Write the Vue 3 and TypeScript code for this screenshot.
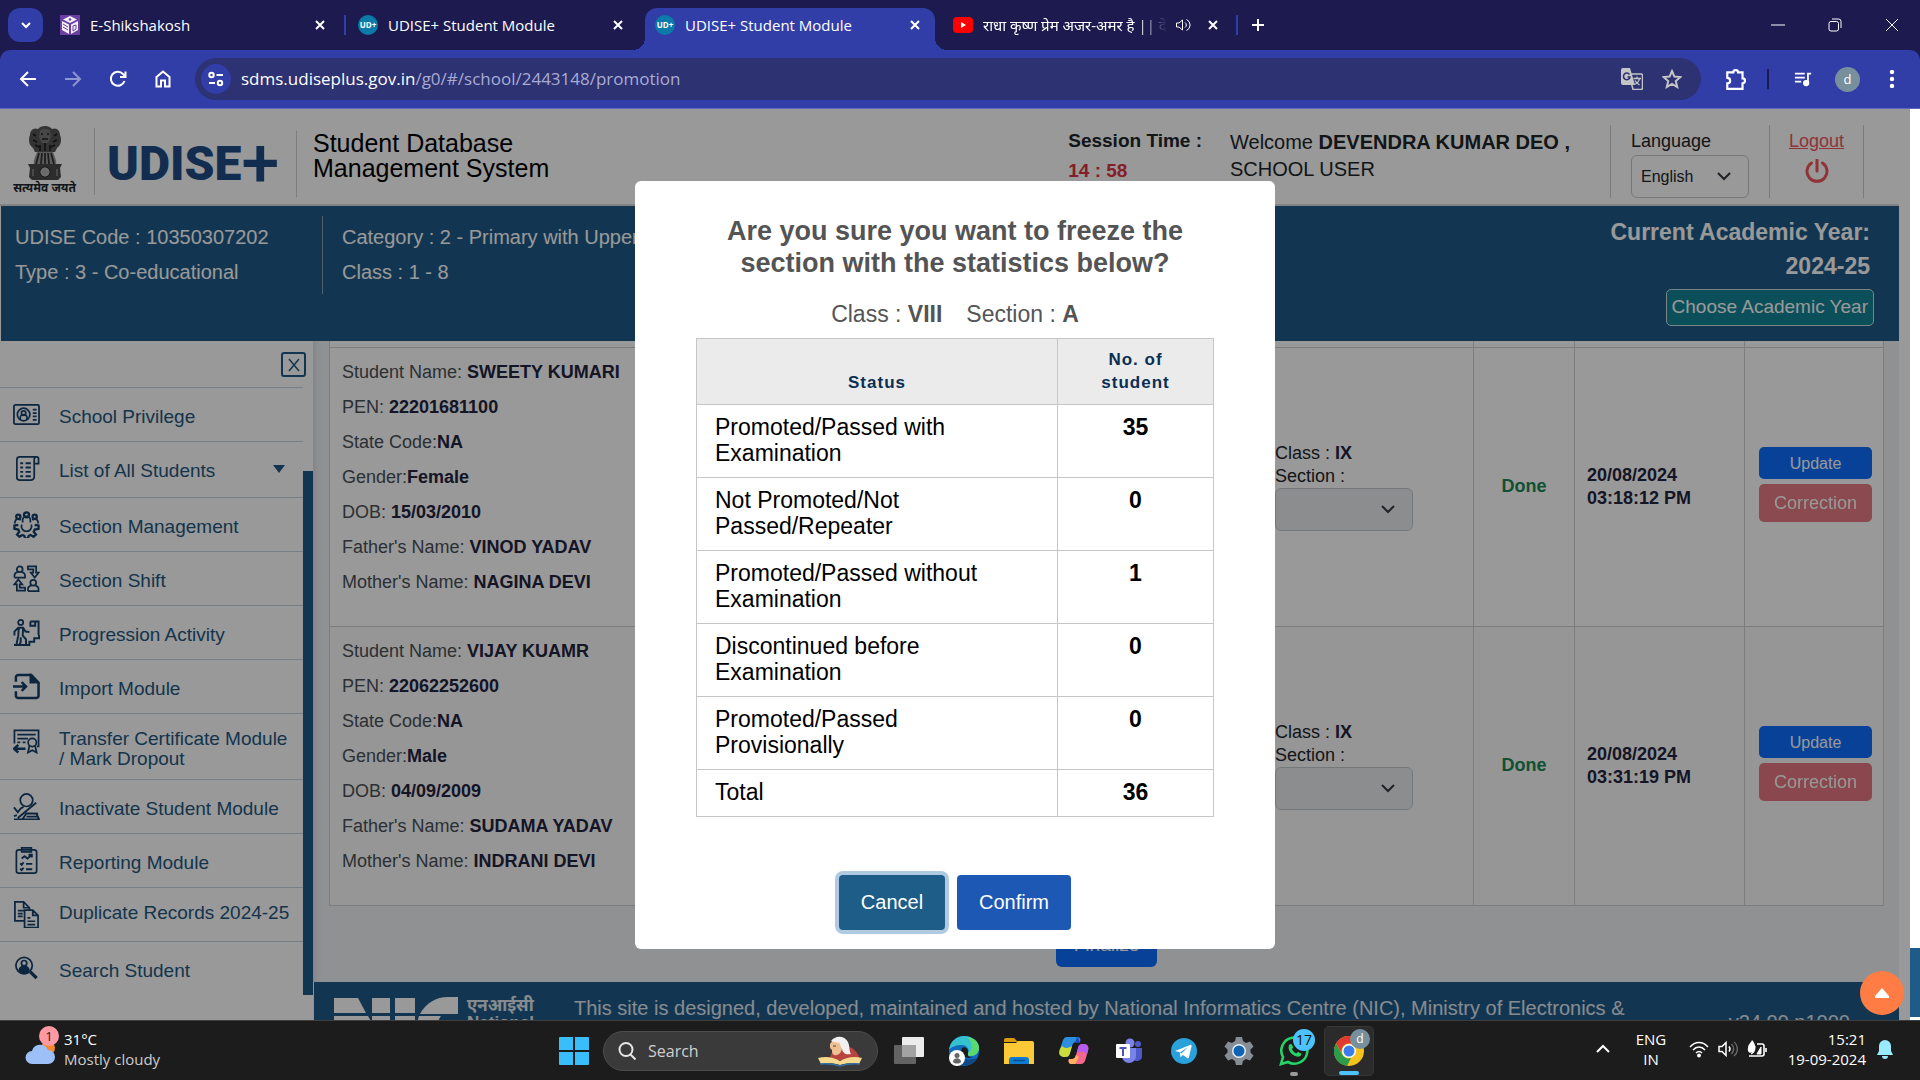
<script setup lang="ts">
import { ref } from 'vue'

interface Tab { title: string; kind: 'cube' | 'udise' | 'video'; active?: boolean; audio?: boolean }
interface MenuItem { label: string; icon: string; caret?: boolean; snug?: boolean }
interface Student {
  name: string; pen: string; state: string; gender: string; dob: string
  father: string; mother: string; date: string; time: string
}
interface Stat { label: string; count: number }
interface App { name: string; icon: string; badge?: string; state?: 'open' | 'active' }

const tabs: Tab[] = [
  { title: 'E-Shikshakosh', kind: 'cube' },
  { title: 'UDISE+ Student Module', kind: 'udise' },
  { title: 'UDISE+ Student Module', kind: 'udise', active: true },
  { title: 'राधा कृष्ण प्रेम अजर-अमर है || दे', kind: 'video', audio: true },
]

const menu: MenuItem[] = [
  { label: 'School Privilege', icon: '<rect x="1" y="4" width="26" height="20" rx="1.5"/><circle cx="11" cy="14" r="6.5"/><circle cx="11" cy="12.5" r="2.3"/><path d="M7.5 19v-1.500a3.500 3.500 0 0 1 7 0V19M20.500 9h4M20.500 12.500h4M20.500 16h4M20.500 19.500h4"/>' },
  { label: 'List of All Students', icon: '<path d="M7 2h17.500a2 2 0 0 1 2 2.500V9H22M7 2a3 3 0 0 0-3 3v18a3 3 0 0 0 3 3h11.500a3.500 3.500 0 0 0 3.500-3.500V4.500A2.300 2.300 0 0 1 24.500 2"/><path d="M7.500 8.500h3M7.500 13h3M7.500 17.500h3M7.500 22h3M13 8.500h5.500M13 13h5.500M13 17.500h5.500M13 22h5.500" stroke-width="2"/>', caret: true },
  { label: 'Section Management', icon: '<circle cx="14" cy="4" r="2.600" stroke-width="2.400"/><circle cx="5.500" cy="6" r="2.200" stroke-width="2.400"/><circle cx="22.500" cy="6" r="2.200" stroke-width="2.400"/><path d="M10 12V9.500a4 4 0 0 1 8 0V12M2 13v-2a3.500 3.500 0 0 1 6-1.500M26 13v-2a3.500 3.500 0 0 0-6-1.500M9 14a5.300 5.300 0 1 0 10 0"/><path d="M5.500 14.500 1.500 15v3.500l4 .8 1 2.200-2.300 3 2.500 2.200 3-1.800 2 .8.800 2.600h3l.800-2.600 2-.8 3 1.800 2.500-2.200-2.300-3 1-2.200 4-.8V15l-4-.5" stroke-width="2.400"/>' },
  { label: 'Section Shift', icon: '<circle cx="7" cy="4.500" r="3"/><path d="M1.500 13v-1.500a4 4 0 0 1 3.500-4M9 7.500a4 4 0 0 1 3.500 4V13h-11"/><circle cx="21" cy="18.500" r="3"/><path d="M15.500 27v-1.500a4 4 0 0 1 3.500-4M23 21.500a4 4 0 0 1 3.500 4V27h-11"/><path d="M15.500 1.500H24V8h2.500l-4 5-4-5H21V4.500h-5.500zM12.500 26.500H4V20H1.500l4-5 4 5H7v3.500h5.500z"/>' },
  { label: 'Progression Activity', icon: '<circle cx="8" cy="3.500" r="2.600"/><path d="M1.500 17v-4l4-4h5l2.500 4 4 .5M6 9.500 5.500 17l-2 10M10.500 10l-.5 7 3.500 4v6M8 19v5L6.500 27M18 2.500h8.500v14M18 2.500V7h5V2.500M1 27h16v-3.500h5V20h5v-3.500" stroke-width="2"/>' },
  { label: 'Import Module', icon: '<path d="M3 9V4.500A2.500 2.500 0 0 1 5.500 2H19l7.500 8v13.500A2.500 2.500 0 0 1 24 26H5.500A2.500 2.500 0 0 1 3 23.500V19M0 14h13M9 9.500l4.500 4.500L9 18.500" stroke-width="2.600"/><path d="M18 2v8h8z" fill="currentColor"/>' },
  { label: 'Transfer Certificate Module / Mark Dropout', snug: true, icon: '<path d="M1.500 17V3.500h25V20H25M4.500 8h19M4.500 12h11M4.500 16h3M10 16h3"/><circle cx="20" cy="16" r="4.300"/><path d="m17 19.500-1.500 7 4.500-2.500 4.500 2.500-1.500-7"/><path d="M13 22.500H1.500M5.500 18.500l-4.500 4 4.500 4" stroke-width="2.600"/>' },
  { label: 'Inactivate Student Module', icon: '<circle cx="14" cy="7.500" r="6.500"/><path d="M1 15l4 5 3-4 3-1.500M1 24l3-1M1 27.500h26l-3-7M5 26 24 10M10 27l4-6 12 .5M14 24.500h12" stroke-width="2"/>' },
  { label: 'Reporting Module', icon: '<rect x="3.500" y="3" width="21" height="24" rx="2.500"/><path d="M9 1h10v4H9z"/><path d="m9 12 3-2.500 3 2.500 4-3.500M16 8h3.500v3M7.500 17l1.500 1.500 2-2.500M7.500 22.500l1.500 1.500 2-2.500M13.500 17.500H20M13.500 23H20" stroke-width="2"/>' },
  { label: 'Duplicate Records 2024-25', snug: true, icon: '<path d="M12 20.500H2V1h9l6 6v3M11 1v6h6M5 10h7M5 13h5M5 16h5"/><path d="M12 9.500h8.500l5.500 5.500v12.500H12zM20.500 9.500V15H26M15 17.500h3M15 21h8M15 24.500h8"/>' },
  { label: 'Search Student', icon: '<circle cx="11.500" cy="11" r="8.500"/><circle cx="11.500" cy="8.500" r="2.800"/><path d="M6.500 16.500c0-4 3-4.500 5-4.500s5 .5 5 4.500c-3 2.500-7 2.500-10 0z" fill="currentColor"/><path d="m18 17.500 6.500 6.500" stroke-width="3.600"/>' },
]

const students: Student[] = [
  { name: 'SWEETY KUMARI', pen: '22201681100', state: 'NA', gender: 'Female', dob: '15/03/2010', father: 'VINOD YADAV', mother: 'NAGINA DEVI', date: '20/08/2024', time: '03:18:12 PM' },
  { name: 'VIJAY KUAMR', pen: '22062252600', state: 'NA', gender: 'Male', dob: '04/09/2009', father: 'SUDAMA YADAV', mother: 'INDRANI DEVI', date: '20/08/2024', time: '03:31:19 PM' },
]

const stats: Stat[] = [
  { label: 'Promoted/Passed with Examination', count: 35 },
  { label: 'Not Promoted/Not Passed/Repeater', count: 0 },
  { label: 'Promoted/Passed without Examination', count: 1 },
  { label: 'Discontinued before Examination', count: 0 },
  { label: 'Promoted/Passed Provisionally', count: 0 },
]

const apps: App[] = [
  { name: 'Task view', icon: '<rect x="8" y="1" width="22" height="20" rx="1" fill="#ececec"/><rect x="0" y="9" width="22" height="19" rx="1" fill="#6b6b6b" opacity=".9"/><path d="M8 9h14v12H8z" fill="#a3a3a3"/>' },
  { name: 'Edge', icon: '<circle cx="15" cy="15" r="15" fill="#0f6cbd"/><path d="M0 14C1 5 8 0 15 0c9 0 15 6 15 12 0 5-4 8-8 8-3 0-4-1-3-3 2-3-1-8-6-8C7 9 2 11 0 14z" fill="#35c1d0"/><path d="M18 1c8 1 12 6 12 11 0 5-4 8-8 8-3 0-4-1-3-3 5-3 5-11-1-16z" fill="#5bd96f"/><path d="M12 13c-2 8 5 13 16 9-4 7-13 10-20 5-3-6 0-12 4-14z" fill="#104a86"/><path d="M13 12c3-2 7 1 6 5-1 3 1 5 5 4-6 3-14-2-11-9z" fill="#1c1c1c"/><circle cx="8" cy="22" r="8" fill="#fff"/><circle cx="8" cy="19.500" r="2.500" fill="#666"/><path d="M4 26c0-5 8-5 8 0-2 2-6 2-8 0z" fill="#666"/>' },
  { name: 'File Explorer', icon: '<path d="M0 4a2 2 0 0 1 2-2h8l4 4H0z" fill="#d99b0b"/><path d="M0 7h12l2-2h14a2 2 0 0 1 2 2v21H0z" fill="#fdc937"/><path d="M5 28v-4a3 3 0 0 1 3-3h14a3 3 0 0 1 3 3v4z" fill="#0f7bd0"/><path d="M9 24.500h12" stroke="#0b4f92" stroke-width="1.500"/>' },
  { name: 'Copilot', icon: '<path d="M8 1h10c3 0 4 2 3 5h-4c-2 0-3 1-4 4l-2 7c-1 3-2 4-5 4-5 0-7-3-5-8l3-9c1-2 2-3 4-3z" fill="#2a8fe0"/><path d="M3 10c3 3 7 2 10 0l-2 7c-1 3-2 4-5 4-5 0-7-3-5-8z" fill="#cddc39"/><path d="M16 1c4 0 4 3 5 6h-5l2-6z" fill="#1b49c4"/><path d="M22 28H13c-3 0-4-2-3-5h3c2 0 3-1 4-4l2-7c1-3 2-4 5-4 5 0 6 3 5 7l-3 10c-1 2-2 3-4 3z" fill="#f4688d"/><path d="M19 12c1-3 2-4 5-4 5 0 6 3 5 7l-1 3c-3-3-7-3-10-1z" fill="#b65cf2"/><path d="M10 23h3c2 0 3-1 4-4l3 2-4 7h-3c-3 0-4-2-3-5z" fill="#ffb25e"/>' },
  { name: 'Teams', icon: '<circle cx="16" cy="7" r="4.500" fill="#7b83eb"/><circle cx="24" cy="8" r="3" fill="#5059c9"/><path d="M20 12h8v9a5 5 0 0 1-8 3z" fill="#5059c9"/><path d="M8 12h14v8a7 7 0 0 1-14 0z" fill="#7b83eb"/><rect x="2" y="8" width="14" height="14" rx="1" fill="#fff"/><path d="M5.500 12h7M9 12v8" stroke="#4b53bc" stroke-width="2"/>' },
  { name: 'Telegram', icon: '<circle cx="15" cy="15" r="13" fill="#2aa1da"/><path d="m6 15 15-6c1-.4 2 0 1.500 1.500L20 21c-.3 1.300-1.200 1.500-2 .9l-4-3-2.500 2.300-.7-5z" fill="#fff"/><path d="m11 16.500 8-5.500-6.500 6.500z" fill="#2aa1da"/>' },
  { name: 'Settings', icon: '<path d="M12 1h6l1 4 3 2 4-1.500 3.500 5-3 3v3l3 3-3.500 5-4-1.500-3 2-1 4h-6l-1-4-3-2-4 1.500-3.500-5 3-3v-3l-3-3L4 5.500 8 7l3-2z" fill="#868d95"/><circle cx="15" cy="15" r="7" fill="#e9eef3"/><circle cx="15" cy="15" r="5.500" fill="#0f63b5"/>' },
  { name: 'WhatsApp', icon: '<path d="m2 28 2-7A13 13 0 1 1 9 26z" fill="#1c1c1c" stroke="#25d366" stroke-width="2.600"/><path d="M10 9c2-2 3-1 4 2 .3 1-1 1.500-1 2.300 1 2 2.200 3 4 4 1 0 1.300-1.600 2.300-1.300 3 1.300 4 2 2 4-5 3-14-5-11.300-11z" fill="#25d366"/>', badge: '17', state: 'open' },
  { name: 'Chrome', icon: '<circle cx="15" cy="15" r="15" fill="#f6c21c"/><path d="M2 7.500A15 15 0 0 1 28 7.500H15a7.500 7.500 0 0 0-7 10z" fill="#e23b2e"/><path d="M2 7.500 8.500 19A7.500 7.500 0 0 0 17 22l-4 8A15 15 0 0 1 2 7.500z" fill="#2c9b4b"/><circle cx="15" cy="15" r="7" fill="#fff"/><circle cx="15" cy="15" r="5.500" fill="#3b7ded"/>', badge: 'd', state: 'active' },
]

const total = stats.reduce((sum, s) => sum + s.count, 0)
const language = ref('English')
const search = ref('')
</script>

<template>
  <div class="screen">
    <header class="tabstrip">
      <button class="tab-search" aria-label="Search tabs"><svg viewBox="0 0 12 12" width="12" height="12"><path d="m2 4 4 4 4-4" /></svg></button>
      <div v-for="(tab, i) in tabs" :key="i" class="tab" :class="{ active: tab.active, last: tab.audio, split: i === 0 || tab.audio }">
        <svg v-if="tab.kind === 'cube'" class="favicon" viewBox="0 0 20 20"><rect width="20" height="20" fill="#6a3fa0" /><path d="m10 1 7 3.500-7 3.500-7-3.500zM2 6l7 3.500V19l-7-4zM18 6l-7 3.500V19l7-4z" fill="#f4effa" /><path d="m3 9 5 3M3 12l5 3M13 11v5l3-2v-4z" stroke="#6a3fa0" fill="none" /><circle cx="10" cy="4.500" r="1.200" fill="#6a3fa0" /></svg>
        <span v-else-if="tab.kind === 'udise'" class="favicon ud">UD+</span>
        <svg v-else class="favicon" viewBox="0 0 20 20"><rect y="2" width="20" height="16" rx="4" fill="#f00" /><path d="m8 7 5 3-5 3z" fill="#fff" /></svg>
        <span class="tab-title">{{ tab.title }}</span>
        <svg v-if="tab.audio" class="audio" viewBox="0 0 16 16" width="16" height="16"><path d="M1.500 6v4H4l3.500 3V3L4 6zM10 5.500a3 3 0 0 1 0 5M11.500 2.500a6 6 0 0 1 0 11" /></svg>
        <button class="tab-close" aria-label="Close tab"><svg viewBox="0 0 12 12" width="12" height="12"><path d="m2 2 8 8M10 2l-8 8" /></svg></button>
      </div>
      <button class="new-tab" aria-label="New tab"><svg viewBox="0 0 14 14" width="14" height="14"><path d="M7 1v12M1 7h12" /></svg></button>
      <div class="window-controls">
        <button aria-label="Minimize"><svg viewBox="0 0 14 14" width="14" height="14"><path d="M0 7h14" /></svg></button>
        <button aria-label="Restore"><svg viewBox="0 0 14 14" width="14" height="14"><rect x="1" y="3.500" width="9.500" height="9.500" rx="2" /><path d="M4 1h6.500A2.500 2.500 0 0 1 13 3.500V10" /></svg></button>
        <button aria-label="Close"><svg viewBox="0 0 14 14" width="14" height="14"><path d="m1 1 12 12M13 1 1 13" /></svg></button>
      </div>
    </header>

    <nav class="toolbar" aria-label="Browser toolbar">
      <button class="tool" aria-label="Back"><svg viewBox="0 0 18 18"><path d="M17 9H2M9 2 2 9l7 7" /></svg></button>
      <button class="tool off" aria-label="Forward"><svg viewBox="0 0 18 18"><path d="M1 9h15M9 2l7 7-7 7" /></svg></button>
      <button class="tool" aria-label="Reload"><svg viewBox="0 0 18 18"><path d="M15.500 11A7 7 0 1 1 14 4l2 2M16.500 1.500V7H11" /></svg></button>
      <button class="tool" aria-label="Home"><svg viewBox="0 0 18 18"><path d="M2.500 7 9 1.500 15.500 7v9.500H11v-6H7v6H2.500z" /></svg></button>
      <div class="omnibox">
        <span class="site-info"><svg viewBox="0 0 18 18" width="18" height="18"><circle cx="4.500" cy="5" r="2.200" /><path d="M9.500 5H16M2 13h6" /><circle cx="13" cy="13" r="2.200" /></svg></span>
        <span class="url"><span>sdms.udiseplus.gov.in</span>/g0/#/school/2443148/promotion</span>
        <svg class="translate" viewBox="0 0 22 22" width="22" height="22"><path d="M8 6h12a1.500 1.500 0 0 1 1.500 1.500V20a1.500 1.500 0 0 1-1.500 1.500H12z" fill="none" stroke="#c5c5c5" stroke-width="1.500" /><path d="M2 0h7l5 17H2a2 2 0 0 1-2-2V2a2 2 0 0 1 2-2z" fill="#c5c5c5" /><path d="M8.500 6.500A3.300 3.300 0 1 0 9 9H6.500" fill="none" stroke="#2c3272" stroke-width="1.500" /><path d="M12.500 10.500H20M16 8.500v2M18.500 10.500c-.5 3-3 5-5 6M14 12.500c1 2 3 3.500 4.500 4.500" fill="none" stroke="#c5c5c5" stroke-width="1.300" /></svg>
        <svg class="star" viewBox="0 0 20 20" width="20" height="20"><path d="m10 2 2.400 5.600 6 .5-4.600 4 1.400 5.900L10 14.900 4.800 18l1.400-5.900-4.600-4 6-.5z" /></svg>
      </div>
      <button class="tool ext" aria-label="Extensions"><svg viewBox="0 0 22 22"><path d="M3 5h5.500a2.200 2.200 0 0 1 4.400 0H17v5.500a2.200 2.200 0 0 1 0 4.400V20H3v-5c3.500 0 3.500-5 0-5z" /></svg></button>
      <span class="tool-sep"></span>
      <button class="tool" aria-label="Media"><svg viewBox="0 0 20 18"><path d="M1 3h11M1 7.500h11M1 12h7M15.500 13V3H19" /><circle cx="13.500" cy="13.500" r="2.500" fill="#fff" /></svg></button>
      <span class="avatar">d</span>
      <button class="tool menu-dots" aria-label="Menu"><svg viewBox="0 0 18 18"><circle cx="9" cy="2" r="1.200" /><circle cx="9" cy="9" r="1.200" /><circle cx="9" cy="16" r="1.200" /></svg></button>
    </nav>

    <div class="viewport">
      <div class="page">
        <div class="site-header">
          <div class="emblem">
            <svg viewBox="0 0 44 56" width="44" height="56"><path d="M15 4c3-4 11-4 14 0 5-2 8 2 8 6 2 5 1 10-3 13l-2 4H12l-2-4c-4-3-5-8-3-13 0-4 3-8 8-6z" fill="#555" /><path d="M17 6c2-3 8-3 10 0l1 6-3 6h-6l-3-6z" fill="#777" /><path d="M18 9h2M24 9h2M19 14h6M10 9l3 2M34 9l-3 2M10 15l4 2M34 15l-4 2M12 20l4 2M32 20l-4 2M17 20v6M22 18v8M27 20v6" stroke="#1d1d1d" stroke-width="1.600" fill="none" /><path d="M14 27c-2 6-4 8-3 13h22c1-5-1-7-3-13z" fill="#999" /><path d="M16 28l-3 11M19 28l-1 11M22 28v11M25 28l1 11M28 28l3 11" stroke="#333" stroke-width="1.800" /><path d="M5 39h34l-2 4 1 9-3 3H9l-3-3 1-9z" fill="#4a4a4a" /><circle cx="22" cy="47" r="5" fill="#bbb" stroke="#222" /><path d="M22 42v10M17 47h10M10 44v7M34 44v7" stroke="#aaa" /></svg>
            <span>सत्यमेव जयते</span>
          </div>
          <div class="brand">UDISE<span>+</span></div>
          <div class="product">Student Database<br>Management System</div>
          <div class="session"><b>Session Time :</b><b class="clock">14 : 58</b></div>
          <div class="welcome">Welcome <b>DEVENDRA KUMAR DEO ,</b><br>SCHOOL USER</div>
          <div class="language">
            <label for="lang">Language</label>
            <div class="select-box">
              <select id="lang" v-model="language"><option>English</option></select>
              <svg viewBox="0 0 16 16" width="16" height="16"><path d="m2 5 6 6 6-6" /></svg>
            </div>
          </div>
          <div class="logout">
            <a href="#logout">Logout</a>
            <svg viewBox="0 0 24 24" width="24" height="24"><path d="M6.500 4a10 10 0 1 0 11 0M12 1v11" /></svg>
          </div>
        </div>

        <div class="school-band">
          <div class="school-col first"><div>UDISE Code : 10350307202</div><div>Type : 3 - Co-educational</div></div>
          <div class="school-col"><div>Category : 2 - Primary with Upper Primary</div><div>Class : 1 - 8</div></div>
          <div class="year">
            <b>Current Academic Year:</b><b>2024-25</b>
            <button>Choose Academic Year</button>
          </div>
        </div>

        <div class="body">
          <aside class="sidebar">
            <div class="menu-pane">
              <div class="menu-top"><button aria-label="Close menu"><svg viewBox="0 0 14 14" width="14" height="14"><path d="m2 1 10 12M12 1 2 13" /></svg></button></div>
              <a v-for="(item, i) in menu" :key="item.label" class="menu-item" :class="{ parent: item.caret, snug: item.snug }" :href="'#menu-' + i">
                <svg class="menu-icon" viewBox="0 0 28 28" width="27" height="27" v-html="item.icon"></svg>
                <span>{{ item.label }}</span>
                <svg v-if="item.caret" class="caret" viewBox="0 0 12 8" width="12" height="8"><path d="M0 0h12L6 8z" /></svg>
              </a>
            </div>
            <div class="rail"><div class="rail-thumb"></div></div>
          </aside>

          <main class="main">
            <div class="content">
              <table class="students">
                <colgroup><col><col class="c-class"><col class="c-done"><col class="c-date"><col class="c-act"></colgroup>
                <tbody>
                  <tr class="tail"><td></td><td></td><td></td><td></td><td></td></tr>
                  <tr v-for="(s, i) in students" :key="s.pen">
                    <td class="who">
                      <div>Student Name: <b>{{ s.name }}</b></div>
                      <div>PEN: <b>{{ s.pen }}</b></div>
                      <div>State Code:<b>{{ s.state }}</b></div>
                      <div>Gender:<b>{{ s.gender }}</b></div>
                      <div>DOB: <b>{{ s.dob }}</b></div>
                      <div>Father's Name: <b>{{ s.father }}</b></div>
                      <div>Mother's Name: <b>{{ s.mother }}</b></div>
                    </td>
                    <td class="target">
                      <div>Class : <b>IX</b></div>
                      <label :for="'section' + i">Section :</label>
                      <div class="select-box wide">
                        <select :id="'section' + i" disabled><option></option></select>
                        <svg viewBox="0 0 16 16" width="16" height="16"><path d="m2 5 6 6 6-6" /></svg>
                      </div>
                    </td>
                    <td class="done">Done</td>
                    <td class="date"><b>{{ s.date }}<br>{{ s.time }}</b></td>
                    <td class="actions"><button class="update">Update</button><button class="correction" disabled>Correction</button></td>
                  </tr>
                </tbody>
              </table>
              <button class="finalize">Finalize</button>
            </div>
            <footer class="site-footer">
              <svg class="nic" viewBox="0 0 124 46" width="124" height="46"><path d="M0 1h24l8 15H0zM38 1h18v15H38zM61 1h20v15H61zM124 0v17H86C92 6 102 0 114 0zM0 19h34l4 7v-7h18v27H40L20 28v18H0zM61 19h20v27H61zM85 19h22c-4 5-4 12 0 14h17v13h-22c-14 0-22-12-17-27z" /></svg>
              <div class="nic-name">एनआईसी<br>National</div>
              <p>This site is designed, developed, maintained and hosted by National Informatics Centre (NIC), Ministry of Electronics &amp;</p>
              <span class="version">v24.09.n1000</span>
            </footer>
          </main>
        </div>

        <div class="backdrop">
          <section class="modal" role="dialog" aria-labelledby="freeze-title">
            <h2 id="freeze-title">Are you sure you want to freeze the section with the statistics below?</h2>
            <p class="which"><span>Class : <b>VIII</b></span><span>Section : <b>A</b></span></p>
            <table class="stats">
              <thead><tr><th>Status</th><th class="num">No. of student</th></tr></thead>
              <tbody>
                <tr v-for="row in stats" :key="row.label"><td><span>{{ row.label }}</span></td><td class="num">{{ row.count }}</td></tr>
                <tr><td><span>Total</span></td><td class="num">{{ total }}</td></tr>
              </tbody>
            </table>
            <div class="modal-actions"><button class="cancel">Cancel</button><button class="confirm">Confirm</button></div>
          </section>
        </div>
      </div>
      <div class="scrollbar"><div class="scroll-thumb"></div></div>
      <button class="to-top" aria-label="Back to top"><svg viewBox="0 0 14 10" width="14" height="10"><path d="M7 0l7 8v2H0V8z" /></svg></button>
    </div>

    <footer class="taskbar">
      <div class="weather">
        <span class="weather-icon">
          <svg viewBox="0 0 30 30" width="30" height="30"><circle cx="23" cy="12" r="7" fill="#f5892d" /><path d="M7 28a6.500 6.500 0 0 1 0-13 8.500 8.500 0 0 1 16-1 7 7 0 0 1 0 14z" fill="#9dc0f8" /></svg>
          <i>1</i>
        </span>
        <span>31°C<small>Mostly cloudy</small></span>
      </div>
      <div class="apps">
        <button class="app" aria-label="Start"><svg viewBox="0 0 30 30" width="30" height="30"><path d="M0 2a1 1 0 0 1 1-1h13v13H0zM16 1h13a1 1 0 0 1 1 1v12H16zM0 16h14v13H1a1 1 0 0 1-1-1zM16 16h14v12a1 1 0 0 1-1 1H16z" fill="#39bdfb" /></svg></button>
        <div class="search">
          <svg viewBox="0 0 18 18" width="18" height="18"><circle cx="8" cy="7.500" r="6.500" /><path d="m12.500 12.500 5 5" /></svg>
          <input v-model="search" type="text" placeholder="Search" aria-label="Search">
          <svg class="reader" viewBox="0 0 46 32" width="46" height="32"><path d="M13 24c0-8 8-13 16-13 8 1 13 8 14 14H13z" fill="#b8433f" /><path d="M15 7c1-6 12-8 16 0 2 5 1 9 3 12-6 1-8-1-9-5z" fill="#f1efef" /><path d="M13 9c2-4 6-5 9-2l3 7c-1 4-4 7-8 6-2-1-2-3-2-5l-2-2z" fill="#efbf91" /><path d="M14 6c3-4 8-4 11-1l2 8-4-5-6-1z" fill="#f1efef" /><path d="M16 11h3" stroke="#444" /><path d="M1 23c8-2 15-1 22 3 7-4 14-5 22-3l-3 6c-7-1-13-1-19 1-6-2-12-2-19-1z" fill="#f6d88e" /><path d="M3 29c8-1 14 0 20 2 6-2 12-3 20-2" stroke="#2e6fa7" fill="none" stroke-width="1.500" /></svg>
        </div>
        <button v-for="app in apps" :key="app.name" class="app" :class="app.state" :aria-label="app.name">
          <svg viewBox="0 0 30 30" width="30" height="30" v-html="app.icon"></svg>
          <i v-if="app.badge">{{ app.badge }}</i>
        </button>
      </div>
      <div class="tray">
        <svg viewBox="0 0 14 14" width="14" height="14"><path d="m1 10 6-6 6 6" stroke-width="2" /></svg>
        <span class="lang-code">ENG<br>IN</span>
        <span class="tray-icons">
          <svg viewBox="0 0 20 18" width="20" height="18"><path d="M1 7c5-6 13-6 18 0M4 10c3.500-4 8.500-4 12 0M7 13c2-2 4-2 6 0" /><circle cx="10" cy="15.500" r="1.200" fill="#fff" /></svg>
          <svg viewBox="0 0 20 18" width="20" height="18"><path d="M1 6.500v5h3l4 4v-13l-4 4zM11 6.500a4 4 0 0 1 0 5" /><path d="M13.500 4a7 7 0 0 1 0 10M16 2a9 9 0 0 1 0 14" stroke="#666" /></svg>
          <svg viewBox="0 0 20 18" width="20" height="18"><path d="M10 4h5a2 2 0 0 1 2 2v8a2 2 0 0 1-2 2H2M19 8v4" stroke-width="1.600" /><path d="M5 0c3 3 5 9 1 12-3 2-6 0-5-4 0-4 3-5 4-8z" fill="#fff" stroke="none" /><path d="M4 14c3-1 4-3 4-8M10 14l4-7v7z" fill="#fff" stroke-width="1" /></svg>
        </span>
        <span class="clock-text">15:21<br>19-09-2024</span>
        <svg class="bell" viewBox="0 0 16 20" width="16" height="20"><path d="M8 1a6 6 0 0 1 6 6v5l2 4H0l2-4V7a6 6 0 0 1 6-6zM5 17h6a3 3 0 0 1-6 0z" /></svg>
      </div>
    </footer>
  </div>
</template>

<style>
html, body { height: 100%; overflow: hidden; }
body { margin: 0; }
</style>

<style scoped>
* { box-sizing: border-box; }
button, input, select { font: inherit; color: inherit; margin: 0; }
button { border: 0; background: none; padding: 0; cursor: pointer; }
svg { flex: none; fill: none; }
.screen { height: 100vh; display: flex; flex-direction: column; background: #1c1a4f; font-family: "Liberation Sans", Arial, sans-serif; overflow: hidden; }

/* tab strip */
.tabstrip { height: 50px; flex: none; display: flex; align-items: flex-end; padding-left: 8px; color: #fff; font: 15px/20px "Open Sans", "Noto Sans", sans-serif; }
.tabstrip svg path, .tabstrip svg rect { stroke-width: 2; }
.tab-search { width: 35px; height: 34px; margin: 0 6px 8px 0; border-radius: 12px; background: #323ea8; display: grid; place-items: center; }
.tab-search svg, .tab-close svg, .new-tab svg { stroke: #fff; }
.tab { height: 42px; flex: 0 1 298px; min-width: 0; display: flex; align-items: center; padding: 0 21px 8px 11px; position: relative; }
.tab.split::after { content: ""; position: absolute; right: 1px; top: 7px; width: 2px; height: 20px; background: #323ea8; }
.tab.active { background: #323ea8; border-radius: 12px 12px 0 0; flex-basis: 290px; padding: 0 14px 8px 10px; }
.tab.active::before, .tab.active::after { content: ""; position: absolute; bottom: 0; width: 12px; height: 12px; }
.tab.active::before { right: 100%; background: radial-gradient(circle at 0 0, transparent 12px, #323ea8 12px); }
.tab.active::after { left: 100%; background: radial-gradient(circle at 100% 0, transparent 12px, #323ea8 12px); }
.tab.last { padding: 0 20px 8px 18px; flex-basis: 304px; }
.favicon { width: 20px; height: 20px; margin-right: 10px; flex: none; }
.tabstrip .favicon path, .tabstrip .favicon rect { stroke-width: 1; }
.ud { border-radius: 50%; background: #0a7aa8; font: 700 8px/20px "Open Sans", sans-serif; text-align: center; }
.tab-title { flex: 1; min-width: 0; overflow: hidden; white-space: nowrap; }
.last .tab-title { mask-image: linear-gradient(90deg, #000 84%, transparent); }
.tab-close { width: 12px; height: 12px; display: grid; place-items: center; }
.audio { stroke: #fff; margin: 0 16px 0 8px; }
.tabstrip .audio path { stroke-width: 1; }
.new-tab { height: 34px; width: 38px; margin-bottom: 8px; display: grid; place-items: center; }
.window-controls { margin-left: auto; display: flex; align-self: stretch; }
.window-controls button { width: 57px; display: grid; place-items: center; }
.window-controls svg { stroke: #fff; }
.tabstrip .window-controls svg path, .tabstrip .window-controls svg rect { stroke-width: 1; }

/* toolbar */
.toolbar { height: 59px; flex: none; background: #323ea8; border-radius: 10px 10px 0 0; border-bottom: 1px solid #5c66c4; display: flex; align-items: center; padding: 0 7px 0 5px; }
.tool { width: 45px; height: 40px; display: grid; place-items: center; }
.tool svg { width: 18px; height: 18px; stroke: #fff; stroke-width: 2; }
.tool.off { opacity: .45; }
.ext { width: 66px; padding-left: 4px; }
.tool.ext svg { width: 24px; height: 24px; }
.tool-sep { width: 2px; height: 20px; background: #1c1a4f; margin-right: 11px; }
.omnibox { flex: 1; min-width: 0; height: 42px; margin-left: 10px; border-radius: 21px; background: #2c3272; display: flex; align-items: center; padding: 0 19px 0 6px; }
.site-info { width: 30px; height: 30px; border-radius: 50%; background: #323ea8; display: grid; place-items: center; margin-right: 10px; }
.site-info svg { stroke: #fff; stroke-width: 2; }
.url { flex: 1; min-width: 0; white-space: nowrap; overflow: hidden; font: 17px/24px "Open Sans", "Noto Sans", sans-serif; color: #a9acd2; }
.url span { color: #fff; }
.star { margin-left: 19px; stroke: #c5c5c5; stroke-width: 2; }
.avatar { width: 25px; height: 25px; margin: 0 10px; border-radius: 50%; background: #78909c; color: #fff; font: 13px/24px "Open Sans", sans-serif; text-align: center; }
.menu-dots { width: 43px; }
.menu-dots svg { fill: #fff; }

/* page */
.viewport { flex: 1; min-height: 0; display: flex; position: relative; background: #fff; }
.page { flex: 1; min-width: 0; display: flex; flex-direction: column; position: relative; overflow: hidden; padding-right: 11px; color: #212529; }
.scrollbar { width: 10px; display: flex; flex-direction: column; justify-content: flex-end; padding-bottom: 3px; }
.scroll-thumb { height: 69px; background: #1f5b88; }
.site-header { height: 97px; flex: none; display: flex; align-items: flex-start; border-bottom: 2px solid #dadada; padding: 16px 35px 0 0; }
.emblem { width: 95px; height: 67px; margin-top: 3px; padding-right: 5px; border-right: 1px solid #d0d0d0; display: flex; flex-direction: column; align-items: center; }
.emblem svg { margin-top: -3px; }
.emblem span { font: 700 12px/14px "Noto Sans", "Noto Sans Devanagari", sans-serif; white-space: nowrap; }
.brand { width: 202px; height: 66px; margin-top: 6px; padding-left: 12px; border-right: 1px solid #d0d0d0; font: 900 48px/66px Roboto, sans-serif; color: #204c86; display: flex; align-items: center; white-space: nowrap; }
.brand span { font-size: 68px; font-weight: 500; line-height: 48px; }
.product { padding: 6px 0 0 16px; font-size: 25px; line-height: 25px; color: #000; white-space: nowrap; }
.session { margin-left: auto; padding-top: 1px; display: flex; flex-direction: column; font-size: 19px; line-height: 30px; white-space: nowrap; }
.session .clock { color: #dc3545; }
.welcome { width: 380px; margin-left: 28px; padding: 4px 0 0; font-size: 20px; line-height: 27px; }
.language, .logout { height: 73px; border-left: 1px solid #ccc; padding: 4px 20px 0; display: flex; flex-direction: column; font-size: 18px; line-height: 24px; }
.language { width: 159px; }
.logout { width: 95px; border-right: 1px solid #ccc; align-items: center; }
.logout a { color: #f0565c; }
.logout svg { margin-top: 6px; stroke: #f0565c; stroke-width: 3; stroke-linecap: round; }
.select-box { position: relative; height: 43px; margin-top: 2px; font-size: 16px; }
.select-box select { width: 100%; height: 100%; appearance: none; border: 1px solid #c4c8cc; border-radius: 6px; background: #fff; padding: 0 9px; opacity: 1; }
.select-box svg { position: absolute; right: 17px; top: 13px; stroke: #343a40; stroke-width: 2; pointer-events: none; }

.school-band { height: 135px; flex: none; margin-left: 1px; background: #1f5b88; color: #fff; display: flex; font-size: 20px; line-height: 35px; }
.school-col { padding: 4px 20px 0 19px; height: 78px; margin-top: 10px; white-space: nowrap; }
.school-col.first { width: 322px; padding-left: 14px; border-right: 1px solid #7ea0bb; }
.year { margin-left: auto; padding: 9px 25px 0 0; display: flex; flex-direction: column; align-items: flex-end; font-size: 23px; line-height: 34px; }
.year b { padding-right: 4px; }
.year button { height: 37px; margin-top: 6px; padding: 0 5px 2px; border: 1px solid #c8dde0; border-radius: 5px; background: #138496; color: #fff; font-size: 19px; line-height: 30px; }

.body { flex: 1; min-height: 0; display: flex; }
.sidebar { width: 313px; display: flex; overflow: hidden; }
.menu-pane { flex: 1; min-width: 0; }
.menu-top { height: 47px; border-bottom: 1px solid #c9d6e2; display: flex; justify-content: flex-end; padding: 11px 0 0; }
.menu-top button { width: 25px; height: 25px; border: 2px solid #1f5b88; border-radius: 3px; display: grid; place-items: center; margin-right: -3px; }
.menu-top svg { stroke: #1f5b88; stroke-width: 1.5; }
.menu-item { min-height: 54px; border-bottom: 1px solid #c9d6e2; display: flex; align-items: flex-start; padding: 13px 10px 10px 13px; color: #24587f; font-size: 19px; line-height: 20px; text-decoration: none; }
.menu-item.parent { min-height: 56px; }
.menu-item:last-child { border: 0; }
.menu-item span { flex: 1; padding-top: 6px; }
.menu-item.snug span { padding-top: 2px; }
.menu-icon { margin-right: 19px; stroke: #14406c; stroke-width: 1.8; color: #14406c; }
.caret { fill: #1f5b88; margin: 10px 8px 0 0; }
.rail { width: 10px; padding: 130px 0 25px; display: flex; }
.rail-thumb { flex: 1; background: #1f5b88; }

.main { flex: 1; min-width: 0; display: flex; flex-direction: column; background: #f0f2f6; }
.content { flex: none; padding: 0 15px 0 16px; display: flex; flex-direction: column; align-items: center; box-shadow: inset 8px 0 8px -8px #c4c8d0; }
.students { width: 100%; table-layout: fixed; border-collapse: collapse; background: #fff; font-size: 18px; line-height: 23px; }
.students td { border: 1px solid #d0d0d0; padding: 0 12px; height: 279px; }
.students .tail td { height: 6px; border-top: 0; }
.students tr:nth-child(odd) td { background: #fafafa; }
.students .tail:nth-child(odd) td { background: #fff; }
.students b { color: #24243e; }
.c-class { width: 211px; }
.c-done { width: 101px; }
.c-date { width: 170px; }
.c-act { width: 139px; }
.who { vertical-align: top; line-height: 35px; color: #495057; }
.students .who { padding-top: 7px; }
.target label { display: block; }
.select-box.wide { width: 138px; margin: 0; }
.select-box.wide select { background: #e9ecef; }
.done { text-align: center; color: #198754; font-weight: 700; }
.students .actions { padding: 0 12px 4px 14px; }
.actions button { display: block; width: 113px; border-radius: 5px; color: #fff; }
.update { height: 32px; background: #0d6efd; font-size: 16px; margin-bottom: 5px; }
.correction { height: 38px; background: #dc3545; opacity: .65; }
.finalize { height: 44px; width: 101px; margin: 17px 0 15px; border-radius: 6px; background: #0d6efd; color: #fff; font-size: 19px; }
.site-footer { flex: 1; min-height: 0; margin-left: 1px; overflow: hidden; background: #1f5b88; color: #e2e8ee; display: flex; padding: 15px 49px 0 20px; font-size: 20px; line-height: 23px; }
.nic { fill: #fff; }
.nic-name { width: 116px; padding-left: 9px; font: 700 17px/17px "Liberation Sans", "Noto Sans Devanagari", sans-serif; }
.site-footer p { margin: 0; flex: 1; }
.version { padding-top: 14px; }

/* dialog */
.backdrop { position: absolute; inset: 0; background: rgba(0, 0, 0, .4); display: flex; align-items: center; justify-content: center; }
.modal { width: 640px; padding: 34px 61px 19px; background: #fff; border-radius: 6px; text-align: center; color: #545454; }
.modal h2 { margin: 0; font-size: 27px; line-height: 32px; }
.which { margin: 22px 0 11px; display: flex; justify-content: center; gap: 24px; font-size: 23px; line-height: 26px; }
.stats { width: 100%; border-collapse: collapse; table-layout: fixed; color: #000; font-size: 23px; line-height: 26px; }
.stats th, .stats td { border: 1px solid #c6c6c6; padding: 9px 18px 11px; vertical-align: top; }
.stats td { text-align: left; }
.stats td span { display: block; max-width: 270px; }
.stats th { padding: 9px 18px 10px; background: #ebebeb; color: #0a2f52; font-size: 17px; line-height: 23px; letter-spacing: 1px; vertical-align: bottom; }
.stats .num { width: 156px; text-align: center; font-weight: 700; }
.stats th.num { padding: 9px 36px 10px; }
.modal-actions { display: flex; justify-content: center; gap: 12px; margin-top: 58px; }
.modal-actions button { height: 55px; border-radius: 4px; color: #fff; font-size: 20px; }
.cancel { width: 106px; background: #1e5d88; box-shadow: 0 0 0 4px #b0cae2; }
.confirm { width: 114px; background: #1d58b5; }
.to-top { position: absolute; right: 16px; bottom: 5px; width: 44px; height: 44px; border-radius: 50%; background: #ff7d45; display: grid; place-items: center; }
.to-top svg { fill: #fff; }

/* taskbar */
.taskbar { height: 60px; flex: none; background: #1c1c1c; border-top: 1px solid #3d3d3d; display: grid; grid-template-columns: 1fr auto 1fr; align-items: center; color: #fff; font: 15px/20px "Open Sans", "Noto Sans", sans-serif; }
.taskbar i { font-style: normal; }
.weather { display: flex; padding: 0 0 3px 25px; gap: 9px; }
.weather-icon { position: relative; width: 30px; height: 40px; padding-top: 7px; }
.weather-icon i { position: absolute; left: 14px; top: -3px; width: 20px; height: 20px; border-radius: 50%; background: #ff99a4; color: #222; text-align: center; line-height: 20px; font-size: 13px; }
.weather small { display: block; font-size: 15px; color: #ccc; }
.apps { display: flex; align-items: center; }
.app { width: 55px; height: 50px; display: grid; place-items: center; position: relative; }
.app i { position: absolute; left: 27px; top: 3px; min-width: 22px; height: 22px; border-radius: 50%; background: #4cc2ff; color: #111; line-height: 22px; font-size: 14px; }
.app.active { width: 50px; margin-left: 3px; background: #2b2b2b; border: 1px solid #363636; border-radius: 5px; }
.app.active i { left: 25px; top: 2px; min-width: 20px; height: 20px; background: #78909c; color: #fff; font-size: 12px; line-height: 19px; }
.app.open::after, .app.active::after { content: ""; position: absolute; bottom: 0; width: 8px; height: 4px; border-radius: 2px; background: #9a9a9a; }
.app.active::after { width: 20px; background: #4cc2ff; }
.search { width: 275px; height: 40px; margin: 0 3px 0 2px; border: 1px solid #4c4c4c; border-radius: 20px; background: #3a3a3a; display: flex; align-items: center; padding: 0 14px; gap: 12px; }
.search svg:first-child { stroke: #e6e6e6; stroke-width: 2; }
.search input { flex: 1; min-width: 0; border: 0; padding: 0; background: none; outline: none; font-size: 16px; }
.search input::placeholder { color: #cfcfcf; opacity: 1; }
.tray { display: flex; align-items: center; justify-content: flex-end; padding: 0 27px 3px 0; }
.tray svg { stroke: #fff; stroke-width: 1.5; }
.lang-code { width: 60px; margin: 0 8px 0 11px; text-align: center; }
.tray-icons { display: flex; gap: 9px; }
.clock-text { width: 99px; text-align: right; white-space: nowrap; }
.tray .bell { margin-left: 11px; fill: #99ebff; stroke: none; }
</style>
